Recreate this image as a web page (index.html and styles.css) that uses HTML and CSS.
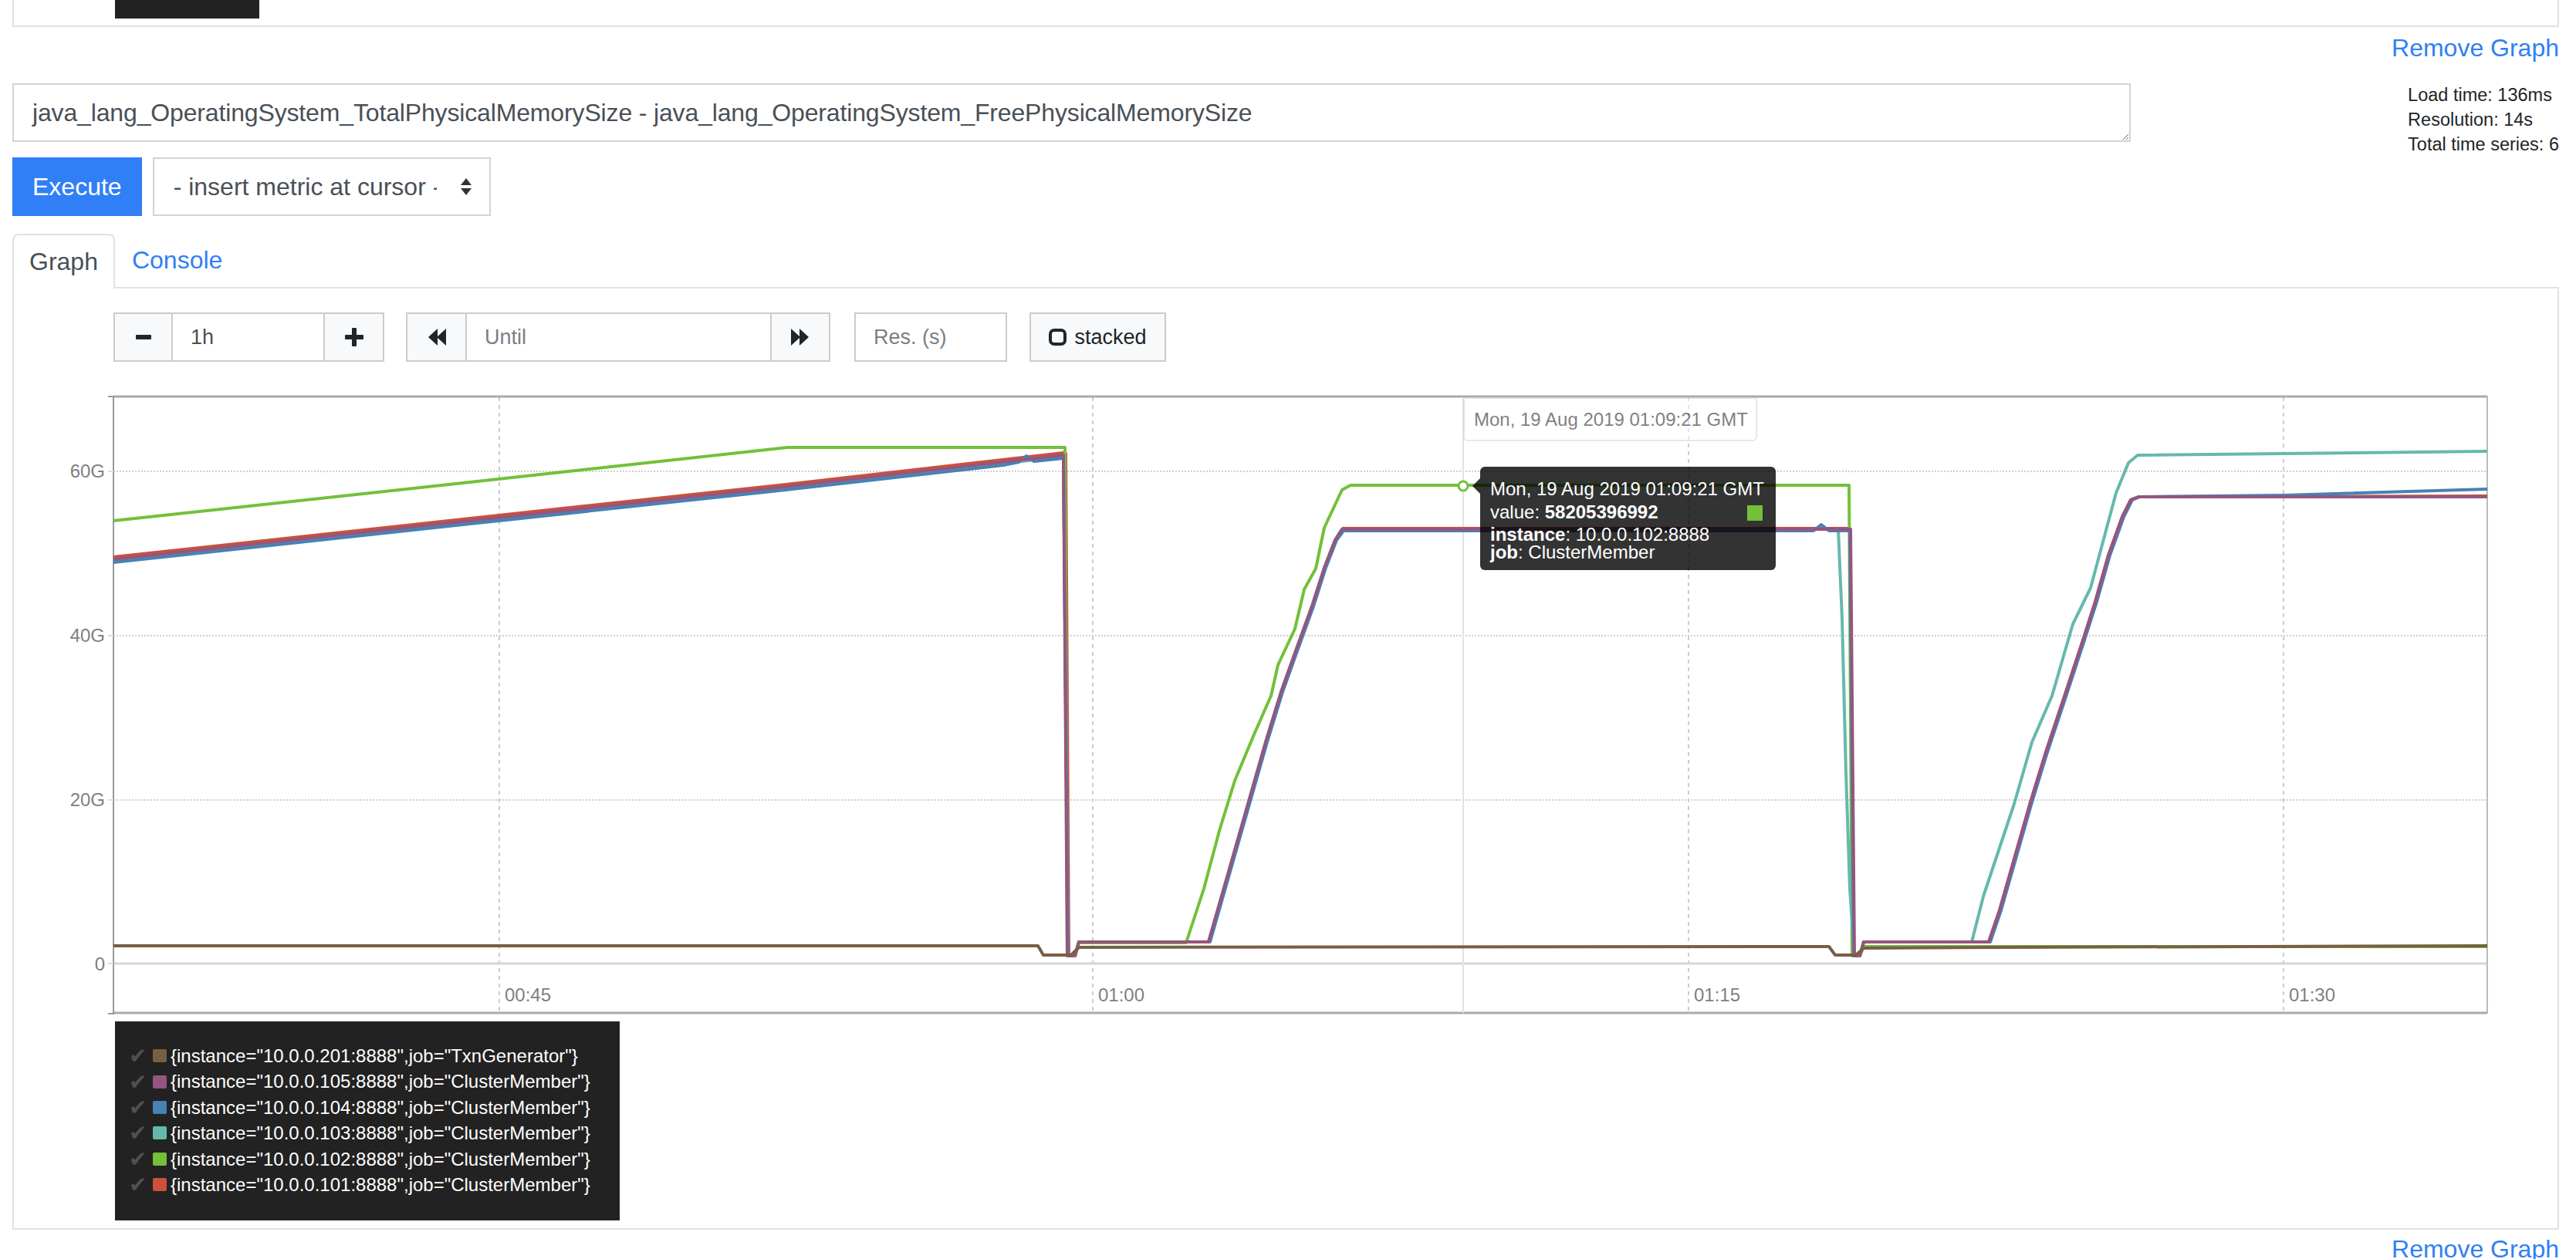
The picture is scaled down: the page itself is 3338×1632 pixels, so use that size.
FILE: index.html
```html
<!DOCTYPE html>
<html>
<head>
<meta charset="utf-8">
<title>Prometheus Time Series Collection and Processing Server</title>
<link rel="stylesheet" href="styles.css">
</head>
<body>
<div class="page">
  <div class="prev-panel"><div class="prev-legend"></div></div>
  <div class="remove-row"><a class="remove-link">Remove Graph</a></div>

  <div class="query-row">
    <div class="query-main">
      <textarea class="expr" rows="1" spellcheck="false">java_lang_OperatingSystem_TotalPhysicalMemorySize - java_lang_OperatingSystem_FreePhysicalMemorySize</textarea>
      <div class="exec-row">
        <button class="btn-exec">Execute</button>
        <div class="metric-select">
          <span class="ms-text">- insert metric at cursor -</span>
          <svg class="ms-arrows" width="16" height="22" viewBox="0 0 16 22"><polygon points="8,0 15,9 1,9" fill="#333"/><polygon points="1,13 15,13 8,22" fill="#333"/></svg>
        </div>
      </div>
    </div>
    <div class="stats">
      <div>Load time: 136ms</div>
      <div>Resolution: 14s</div>
      <div>Total time series: 6</div>
    </div>
  </div>

  <div class="tabs">
    <div class="tab active">Graph</div>
    <div class="tab link">Console</div>
  </div>

  <div class="tab-panel">
    <div class="controls">
      <div class="ctl btn w-minus"><svg width="20" height="6" viewBox="0 0 20 6"><rect x="0" y="0" width="20" height="6" rx="1" fill="#212529"/></svg></div>
      <div class="ctl inp w-range">1h</div>
      <div class="ctl btn w-plus"><svg width="24" height="24" viewBox="0 0 24 24"><rect x="9" y="0" width="6" height="24" rx="1" fill="#212529"/><rect x="0" y="9" width="24" height="6" rx="1" fill="#212529"/></svg></div>

      <div class="ctl btn w-back gap1"><svg width="24" height="22" viewBox="0 0 24 22"><polygon points="13,0 1,11 13,22" fill="#212529"/><polygon points="24,0 12,11 24,22" fill="#212529"/></svg></div>
      <div class="ctl inp ph w-until">Until</div>
      <div class="ctl btn w-fwd"><svg width="24" height="22" viewBox="0 0 24 22"><polygon points="0,0 12,11 0,22" fill="#212529"/><polygon points="11,0 23,11 11,22" fill="#212529"/></svg></div>

      <div class="ctl inp ph w-res gap2">Res. (s)</div>
      <div class="ctl btn w-stacked gap3"><svg width="24" height="22" viewBox="0 0 24 22"><rect x="2" y="2" width="19" height="18" rx="5" fill="none" stroke="#212529" stroke-width="4"/></svg><span class="stk-text">stacked</span></div>
    </div>

    <div class="chart">
      <svg class="chart-svg" width="3170" height="840" viewBox="60 480 3170 840">
        <!-- grid -->
        <g stroke="#cfcfcf" stroke-width="2" stroke-dasharray="2 2">
          <line x1="147" y1="609" x2="3223" y2="609"/>
          <line x1="147" y1="822" x2="3223" y2="822"/>
          <line x1="147" y1="1035" x2="3223" y2="1035"/>
        </g>
        <g stroke="#cccccc" stroke-width="2" stroke-dasharray="5 5">
          <line x1="647" y1="513" x2="647" y2="1311"/>
          <line x1="1416" y1="513" x2="1416" y2="1311"/>
          <line x1="2188" y1="513" x2="2188" y2="1311"/>
          <line x1="2959" y1="513" x2="2959" y2="1311"/>
        </g>
        <line x1="147" y1="1247" x2="3223" y2="1247" stroke="#d6d6d6" stroke-width="3"/>
        <!-- frame -->
        <line x1="147" y1="512" x2="3223" y2="512" stroke="#aaaaaa" stroke-width="3"/>
        <line x1="147" y1="1311" x2="3223" y2="1311" stroke="#aaaaaa" stroke-width="3"/>
        <line x1="147" y1="511" x2="147" y2="1313" stroke="#999999" stroke-width="2"/>
        <line x1="3223" y1="511" x2="3223" y2="1312" stroke="#bbbbbb" stroke-width="2"/>
        <g stroke="#999999" stroke-width="2">
          <line x1="140" y1="512" x2="147" y2="512"/>
          <line x1="140" y1="1312" x2="147" y2="1312"/>
          <line x1="140" y1="609" x2="147" y2="609" stroke="#dddddd"/>
          <line x1="140" y1="822" x2="147" y2="822" stroke="#dddddd"/>
          <line x1="140" y1="1035" x2="147" y2="1035" stroke="#dddddd"/>
          <line x1="140" y1="1247" x2="147" y2="1247" stroke="#dddddd"/>
        </g>
        <!-- axis labels -->
        <g class="axis-text" text-anchor="end">
          <text x="136" y="617">60G</text>
          <text x="136" y="830">40G</text>
          <text x="136" y="1043">20G</text>
          <text x="136" y="1256">0</text>
        </g>
        <g class="axis-text">
          <text x="654" y="1296">00:45</text>
          <text x="1423" y="1296">01:00</text>
          <text x="2195" y="1296">01:15</text>
          <text x="2966" y="1296">01:30</text>
        </g>
        <!-- hover line -->
        <line x1="1896" y1="513" x2="1896" y2="1311" stroke="#e3e3e3" stroke-width="2"/>
        <!-- series -->
        <g fill="none" stroke-width="4" stroke-linejoin="round">
          <polyline stroke="#cb513a" points="147,720 600,671 1000,628 1378,585 1381,586 1385,1237 1393,1237 1398,1219 1566,1219 1580,1172 1600,1102 1620,1032 1640,962 1660,897 1680,841 1700,786 1716,736 1730,700 1740,683 2397,683 2402,1237 2410,1237 2415,1219 2577,1219 2591,1178 2611,1108 2631,1038 2651,973 2676,898 2699,828 2715,778 2732,718 2750,668 2761,646 2771,642 3223,641"/>
          <polyline stroke="#73c03a" points="147,673 600,624 1020,578 1380,578 1383,1237 1393,1237 1398,1220 1537,1220 1560,1150 1580,1075 1600,1010 1625,950 1647,900 1656,860 1678,813 1690,762 1705,735 1716,682 1739,633 1750,627 2396,627 2400,1237 2410,1237 2415,1225 3223,1225"/>
          <polyline stroke="#65b9ac" points="147,724 600,675 1000,632 1378,590 1384,1237 1393,1237 1398,1219 1566,1219 1580,1170 1600,1100 1620,1030 1640,960 1660,895 1680,839 1700,784 1716,734 1730,698 1739,684 2382,684 2387,800 2392,1000 2397,1150 2403,1237 2410,1237 2415,1219 2555,1219 2570,1160 2590,1100 2610,1040 2633,960 2659,900 2686,807 2709,760 2742,637 2758,598 2770,588 3223,583"/>
          <polyline stroke="#4682b4" points="147,727 600,678 1000,635 1300,601 1320,597 1330,589 1340,596 1378,592 1384,1237 1393,1237 1398,1219 1568,1219 1582,1170 1602,1100 1622,1030 1642,960 1662,895 1682,839 1702,784 1718,734 1732,698 1741,686 2350,686 2360,678 2370,686 2397,686 2402,1237 2410,1237 2415,1219 2579,1219 2593,1178 2613,1108 2633,1038 2653,973 2678,898 2701,828 2717,778 2734,718 2752,668 2763,646 2773,642 2960,640 3223,632"/>
          <polyline stroke="#96557e" points="147,723 600,674 1000,631 1378,588 1383,1237 1393,1237 1398,1219 1566,1219 1580,1170 1600,1100 1620,1030 1640,960 1660,895 1680,839 1700,784 1716,734 1730,698 1739,684 2398,684 2403,1237 2410,1237 2415,1219 2577,1219 2591,1178 2611,1108 2631,1038 2651,973 2676,898 2699,828 2715,778 2732,718 2750,668 2761,646 2771,642 3223,642"/>
          <polyline stroke="#785f43" points="147,1224 1345,1224 1352,1236 1388,1236 1398,1226 2370,1225 2378,1236 2405,1236 2415,1227 2600,1226 3223,1224"/>
        </g>
        <circle cx="1896" cy="628" r="6" fill="#ffffff" stroke="#73c03a" stroke-width="3"/>
      </svg>
      <div class="x-label-box">Mon, 19 Aug 2019 01:09:21 GMT</div>
      <div class="tooltip">
        <div class="tt-line">Mon, 19 Aug 2019 01:09:21 GMT</div>
        <div class="tt-line"><span class="tt-swatch"></span>value: <strong>58205396992</strong></div>
        <div class="tt-labels">
          <div><strong>instance</strong>: 10.0.0.102:8888</div>
          <div><strong>job</strong>: ClusterMember</div>
        </div>
      </div>
    </div>

    <div class="legend">
      <div class="lg-line"><span class="lg-check">✔</span><span class="lg-swatch c-brown"></span><span>{instance="10.0.0.201:8888",job="TxnGenerator"}</span></div>
      <div class="lg-line"><span class="lg-check">✔</span><span class="lg-swatch c-purple"></span><span>{instance="10.0.0.105:8888",job="ClusterMember"}</span></div>
      <div class="lg-line"><span class="lg-check">✔</span><span class="lg-swatch c-blue"></span><span>{instance="10.0.0.104:8888",job="ClusterMember"}</span></div>
      <div class="lg-line"><span class="lg-check">✔</span><span class="lg-swatch c-teal"></span><span>{instance="10.0.0.103:8888",job="ClusterMember"}</span></div>
      <div class="lg-line"><span class="lg-check">✔</span><span class="lg-swatch c-green"></span><span>{instance="10.0.0.102:8888",job="ClusterMember"}</span></div>
      <div class="lg-line"><span class="lg-check">✔</span><span class="lg-swatch c-red"></span><span>{instance="10.0.0.101:8888",job="ClusterMember"}</span></div>
    </div>
  </div>

  <div class="remove-row bottom"><a class="remove-link">Remove Graph</a></div>
</div>
</body>
</html>
```

FILE: styles.css
```css
html, body {
  margin: 0;
  padding: 0;
  overflow: hidden;
  background: #ffffff;
}
body {
  font-family: "Liberation Sans", Arial, sans-serif;
  color: #212529;
}
.page {
  padding: 0 22px 0 16px;
}

/* previous graph panel (cut off) */
.prev-panel {
  height: 33px;
  border: 2px solid #dee2e6;
  border-top: none;
}
.prev-legend {
  margin-left: 131px;
  width: 187px;
  height: 24px;
  background: #222222;
}

.remove-row {
  margin-top: 3px;
  text-align: right;
  font-size: 32px;
  line-height: 48px;
}
.remove-link {
  color: #307ff6;
}
.remove-row.bottom {
  margin-top: 1px;
}

/* query row */
.query-row {
  margin-top: 22px;
  display: flex;
  justify-content: space-between;
  align-items: flex-start;
}
.query-main {
  width: 2745px;
}
.expr {
  display: block;
  box-sizing: border-box;
  width: 100%;
  height: 76px;
  margin: 0;
  border: 2px solid #ced4da;
  border-radius: 0;
  padding: 12px 24px;
  font-family: "Liberation Sans", Arial, sans-serif;
  font-size: 32px;
  line-height: 48px;
  letter-spacing: -0.15px;
  color: #495057;
  overflow: hidden;
  resize: vertical;
  outline: none;
}
.exec-row {
  margin-top: 20px;
  display: flex;
  gap: 14px;
}
.btn-exec {
  height: 76px;
  padding: 0 26px;
  border: none;
  border-radius: 0;
  background: #307ff6;
  color: #ffffff;
  font-family: "Liberation Sans", Arial, sans-serif;
  font-size: 32px;
}
.metric-select {
  box-sizing: border-box;
  width: 438px;
  height: 76px;
  border: 2px solid #ced4da;
  display: flex;
  align-items: center;
  padding-left: 25px;
  padding-right: 22px;
  font-size: 32px;
  color: #495057;
}
.ms-text {
  display: inline-block;
  width: 341px;
  overflow: hidden;
  white-space: nowrap;
}
.ms-arrows {
  margin-left: auto;
}
.stats {
  margin-top: -1px;
  font-size: 23.5px;
  line-height: 32px;
  color: #212529;
  white-space: nowrap;
}

/* tabs */
.tabs {
  margin-top: 21px;
  display: flex;
  align-items: flex-end;
  position: relative;
  z-index: 2;
}
.tab {
  font-size: 32px;
  line-height: 48px;
  padding: 10px 20px 11px 20px;
  border: 2px solid transparent;
  border-bottom: none;
}
.tab.active {
  color: #495057;
  background: #ffffff;
  border-color: #dee2e6;
  border-radius: 8px 8px 0 0;
  margin-bottom: -2px;
}
.tab.link {
  color: #307ff6;
}
.tab-panel {
  position: relative;
  z-index: 1;
  border: 2px solid #dee2e6;
  padding: 31px 0 10px 129px;
}

/* controls */
.controls {
  display: flex;
  height: 64px;
}
.ctl {
  box-sizing: border-box;
  height: 64px;
  border: 2px solid #cccccc;
  display: flex;
  align-items: center;
  font-size: 27px;
}
.ctl.btn {
  background: #f8f9fa;
  justify-content: center;
}
.ctl.inp {
  background: #ffffff;
  color: #495057;
  padding-left: 23px;
}
.ctl.inp.ph {
  color: #7a7f85;
}
.w-minus { width: 77px; }
.w-range { width: 199px; margin-left: -2px; }
.w-plus { width: 79px; margin-left: -2px; }
.w-back { width: 79px; }
.w-until { width: 397px; margin-left: -2px; }
.w-fwd { width: 78px; margin-left: -2px; }
.w-res { width: 198px; padding-left: 24px; }
.w-stacked { width: 177px; color: #212529; }
.gap1 { margin-left: 28px; }
.gap2 { margin-left: 31px; }
.gap3 { margin-left: 29px; }
.stk-text {
  margin-left: 9px;
}

/* chart */
.chart {
  position: relative;
  margin-top: 13px;
  margin-left: -87px;
  width: 3170px;
  height: 840px;
}
.chart-svg {
  display: block;
}
.axis-text text {
  font-family: "Liberation Sans", Arial, sans-serif;
  font-size: 24px;
  fill: #808080;
}
.x-label-box {
  position: absolute;
  left: 1836px;
  top: 33px;
  box-sizing: border-box;
  width: 381px;
  height: 57px;
  padding: 8px 12px;
  border: 2px solid #d0d0d0;
  border-radius: 0 0 6px 6px;
  background: #ffffff;
  opacity: 0.5;
  color: #000000;
  font-size: 24px;
  line-height: 37px;
  white-space: nowrap;
}
.tooltip {
  position: absolute;
  left: 1858px;
  top: 123px;
  box-sizing: border-box;
  width: 383px;
  padding: 14px 17px 12px 13px;
  background: rgba(0, 0, 0, 0.8);
  color: #ffffff;
  border-radius: 6px;
  font-size: 24px;
  white-space: nowrap;
}
.tooltip::before {
  content: "";
  position: absolute;
  left: -20px;
  top: 15px;
  border: 10px solid transparent;
  border-right-color: rgba(0, 0, 0, 0.8);
}
.tt-line {
  line-height: 30px;
}
.tt-swatch {
  float: right;
  width: 20px;
  height: 20px;
  margin-top: 6px;
  background: #73c03a;
}
.tt-labels {
  margin-top: 2px;
  line-height: 23px;
}

/* legend */
.legend {
  display: inline-block;
  vertical-align: top;
  margin: 2px 0 0 2px;
  padding: 28px 38px 30px 18px;
  background: #222222;
  color: #ffffff;
  font-size: 24px;
  line-height: 33.4px;
}
.lg-line {
  display: flex;
  align-items: center;
  white-space: nowrap;
}
.lg-check {
  flex: 0 0 31px;
  width: 31px;
  overflow: visible;
  font-family: "DejaVu Sans", sans-serif;
  font-size: 28px;
  line-height: 33px;
  color: #505050;
}
.lg-swatch {
  flex: 0 0 18px;
  width: 18px;
  height: 17px;
  border-radius: 2px;
  margin-right: 5px;
}
.c-brown { background: #785f43; }
.c-purple { background: #96557e; }
.c-blue { background: #4682b4; }
.c-teal { background: #65b9ac; }
.c-green { background: #73c03a; }
.c-red { background: #cb513a; }
```
